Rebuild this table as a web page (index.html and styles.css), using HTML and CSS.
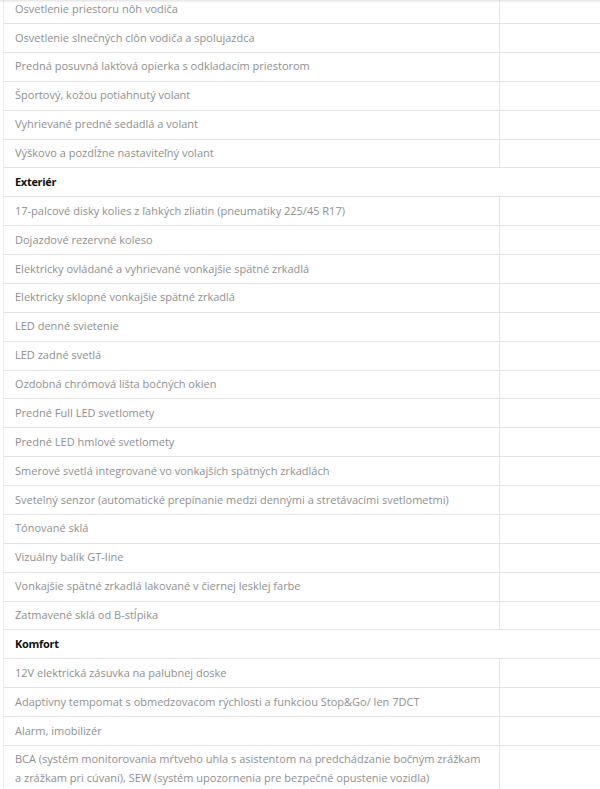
FILE: index.html
```html
<!DOCTYPE html>
<html lang="sk">
<head>
<meta charset="utf-8">
<title>Výbava</title>
<link rel="stylesheet" href="styles.css">
</head>
<body>
<div class="topshade"></div>
<div class="spec">
  <div class="row"><div class="name">Osvetlenie priestoru nôh vodiča</div><div class="val"></div></div>
  <div class="row"><div class="name">Osvetlenie slnečných clôn vodiča a spolujazdca</div><div class="val"></div></div>
  <div class="row"><div class="name">Predná posuvná lakťová opierka s odkladacím priestorom</div><div class="val"></div></div>
  <div class="row"><div class="name">Športový, kožou potiahnutý volant</div><div class="val"></div></div>
  <div class="row"><div class="name">Vyhrievané predné sedadlá a volant</div><div class="val"></div></div>
  <div class="row"><div class="name">Výškovo a pozdĺžne nastaviteľný volant</div><div class="val"></div></div>
  <div class="row group"><div class="title">Exteriér</div></div>
  <div class="row"><div class="name">17-palcové disky kolies z ľahkých zliatin (pneumatiky 225/45 R17)</div><div class="val"></div></div>
  <div class="row"><div class="name">Dojazdové rezervné koleso</div><div class="val"></div></div>
  <div class="row"><div class="name">Elektricky ovládané a vyhrievané vonkajšie spätné zrkadlá</div><div class="val"></div></div>
  <div class="row"><div class="name">Elektricky sklopné vonkajšie spätné zrkadlá</div><div class="val"></div></div>
  <div class="row"><div class="name">LED denné svietenie</div><div class="val"></div></div>
  <div class="row"><div class="name">LED zadné svetlá</div><div class="val"></div></div>
  <div class="row"><div class="name">Ozdobná chrómová lišta bočných okien</div><div class="val"></div></div>
  <div class="row"><div class="name">Predné Full LED svetlomety</div><div class="val"></div></div>
  <div class="row"><div class="name">Predné LED hmlové svetlomety</div><div class="val"></div></div>
  <div class="row"><div class="name">Smerové svetlá integrované vo vonkajších spätných zrkadlách</div><div class="val"></div></div>
  <div class="row"><div class="name">Svetelný senzor (automatické prepínanie medzi dennými a stretávacími svetlometmi)</div><div class="val"></div></div>
  <div class="row"><div class="name">Tónované sklá</div><div class="val"></div></div>
  <div class="row"><div class="name">Vizuálny balík GT-line</div><div class="val"></div></div>
  <div class="row"><div class="name">Vonkajšie spätné zrkadlá lakované v čiernej lesklej farbe</div><div class="val"></div></div>
  <div class="row"><div class="name">Zatmavené sklá od B-stĺpika</div><div class="val"></div></div>
  <div class="row group"><div class="title">Komfort</div></div>
  <div class="row"><div class="name">12V elektrická zásuvka na palubnej doske</div><div class="val"></div></div>
  <div class="row"><div class="name">Adaptívny tempomat s obmedzovacom rýchlosti a funkciou Stop&amp;Go/ len 7DCT</div><div class="val"></div></div>
  <div class="row"><div class="name">Alarm, imobilizér</div><div class="val"></div></div>
  <div class="row"><div class="name">BCA (systém monitorovania mŕtveho uhla s asistentom na predchádzanie bočným zrážkam a zrážkam pri cúvaní), SEW (systém upozornenia pre bezpečné opustenie vozidla)</div><div class="val"></div></div>
</div>
</body>
</html>
```
FILE: styles.css
```css
html, body {
  margin: 0;
  padding: 0;
  background: #ffffff;
  overflow: hidden;
}

body {
  font-family: "Open Sans", "Liberation Sans", sans-serif;
}

.topshade {
  position: fixed;
  top: 0;
  left: 0;
  right: 0;
  height: 3px;
  background: linear-gradient(to bottom, rgba(0,0,0,0.10), rgba(0,0,0,0));
  z-index: 2;
}

.spec {
  margin: -4.88px 0 0 3px;
  border-left: 1px solid #ececec;
  width: 597px;
}

.row {
  display: grid;
  grid-template-columns: 496px 1fr;
  border-bottom: 1px solid #e4e4e4;
  font-size: 11px;
  line-height: 18.88px;
  color: #8f8f8f;
}

.name {
  box-sizing: border-box;
  padding: 4.5px 14px 4.5px 11px;
  border-right: 1px solid #e4e4e4;
}

.val {
  padding: 4.5px 12px;
}

.group {
  grid-template-columns: 1fr;
}

.title {
  padding: 4.5px 11px;
  color: #111111;
  font-weight: 700;
  letter-spacing: -0.3px;
}
```
